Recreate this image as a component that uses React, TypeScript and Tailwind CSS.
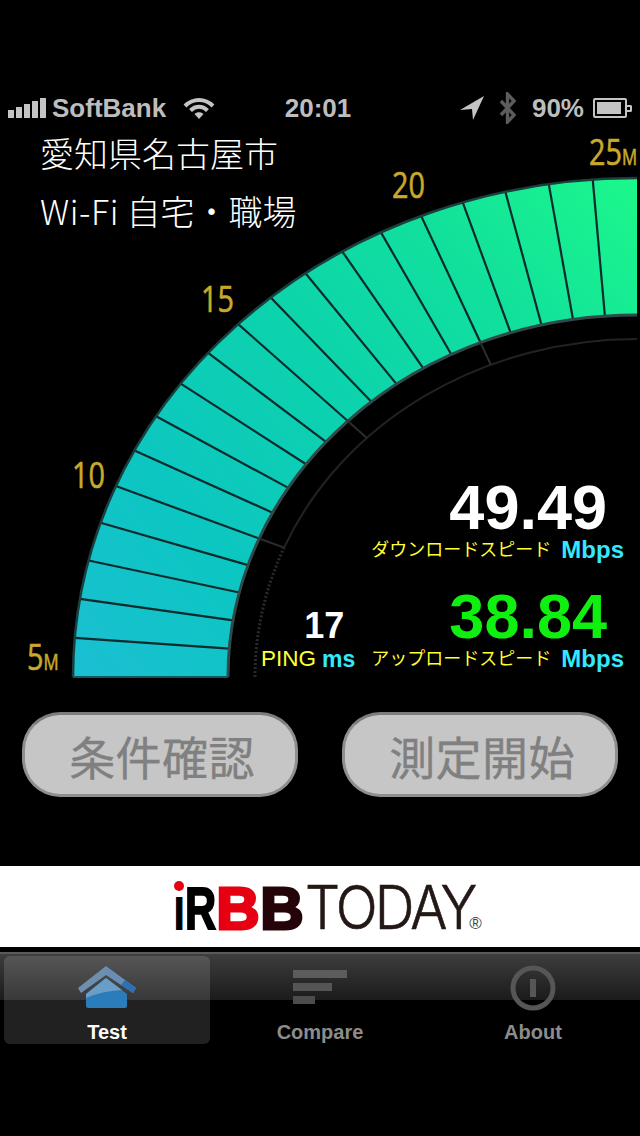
const CX = 637
const CY = 553
const OUT = { rx: 564, ry: 499 }
const IN = { rx: 409, ry: 362 }
const RING = { rx: 382, ry: 338 }

// point on one of the gauge's ellipses, deg measured from the left end going clockwise
function pt(e: { rx: number; ry: number }, deg: number) {
  const t = (deg * Math.PI) / 180
  return [CX - e.rx * Math.cos(t), CY - e.ry * Math.sin(t)]
}

function arc(e: { rx: number; ry: number }, from = 0, to = 90) {
  const [x0, y0] = pt(e, from)
  const [x1, y1] = pt(e, to)
  return `M${x0} ${y0}A${e.rx} ${e.ry} 0 0 1 ${x1} ${y1}`
}

const dividers = Array.from({ length: 19 }, (_, i) => (i + 1) * 4.5)

const band = (() => {
  const [ix, iy] = pt(IN, 90)
  const [ex, ey] = pt(IN, 0)
  return `${arc(OUT)}L${ix} ${iy}A${IN.rx} ${IN.ry} 0 0 0 ${ex} ${ey}Z`
})()

const gaugeLabels = [
  { text: "5", unit: true, x: 27, y: 546 },
  { text: "10", x: 72, y: 364 },
  { text: "15", x: 201, y: 188 },
  { text: "20", x: 392, y: 74 },
  { text: "25", unit: true, x: 589, y: 41 },
]

function Gauge() {
  return (
    <svg className="absolute inset-0" width="640" height="566" viewBox="0 0 640 566">
      <defs>
        <linearGradient id="band" gradientUnits="userSpaceOnUse" x1="73" y1="554" x2="637" y2="54">
          <stop offset="0" stopColor="#1bbfd2" />
          <stop offset="0.25" stopColor="#0cc6c2" />
          <stop offset="0.5" stopColor="#0cd2ae" />
          <stop offset="0.75" stopColor="#11e09c" />
          <stop offset="1" stopColor="#1cf88a" />
        </linearGradient>
      </defs>
      <path d={band} fill="url(#band)" />
      {dividers.map((deg) => {
        const [x0, y0] = pt(OUT, deg)
        const [x1, y1] = pt(IN, deg)
        return <line key={deg} x1={x0} y1={y0} x2={x1} y2={y1} stroke="#0b2a2c" strokeWidth="2.2" />
      })}
      <path d={arc(OUT)} fill="none" stroke="#17403f" strokeWidth="2.5" />
      <path d={arc(IN)} fill="none" stroke="#2f4a4a" strokeWidth="3" />
      <line x1="73" y1={CY} x2="228" y2={CY} stroke="#0f5a60" strokeWidth="2" />
      <path d={arc(RING, 0, 22.5)} fill="none" stroke="#2a2a2a" strokeWidth="3" strokeDasharray="2 2" />
      <path d={arc(RING, 22.5, 90)} fill="none" stroke="#222" strokeWidth="2" />
      {[22.5, 45, 67.5].map((deg) => {
        const [x0, y0] = pt(IN, deg)
        const [x1, y1] = pt(RING, deg)
        return <line key={deg} x1={x0} y1={y0} x2={x1} y2={y1} stroke="#2c2c2c" strokeWidth="2" />
      })}
      {gaugeLabels.map((l) => (
        <text
          key={l.text}
          transform={`translate(${l.x} ${l.y}) scale(0.8 1)`}
          fill="#c9a92b"
          stroke="#c9a92b"
          strokeWidth="0.6"
          fontSize="36"
          className="font-['Open_Sans',sans-serif]"
        >
          {l.text}
          {l.unit && <tspan fontSize="21">M</tspan>}
        </text>
      ))}
    </svg>
  )
}

function StatusBar() {
  return (
    <div className="grid h-8 grid-cols-[1fr_auto_1fr] items-center px-2 text-[26px] font-bold leading-8 text-[#bdbdbd]">
      <div className="flex items-center">
        <div className="flex h-5 items-end gap-[2px]">
          <span className="h-2 w-[6px] bg-[#c4c4c4]" />
          <span className="h-[11px] w-[6px] bg-[#c4c4c4]" />
          <span className="h-[14px] w-[6px] bg-[#c4c4c4]" />
          <span className="h-[17px] w-[6px] bg-[#c4c4c4]" />
          <span className="h-5 w-[6px] bg-[#c4c4c4]" />
        </div>
        <span className="ml-[6px]">SoftBank</span>
        <svg className="ml-[17px]" width="32" height="22" viewBox="0 0 32 22">
          <path d="M2 9C10 1 22 1 30 9" fill="none" stroke="#c4c4c4" strokeWidth="4" />
          <path d="M7.5 13.5C12.5 8.5 19.5 8.5 24.5 13.5" fill="none" stroke="#c4c4c4" strokeWidth="4" />
          <path d="M11.5 17C14 14.5 18 14.5 20.5 17L16 22Z" fill="#c4c4c4" />
        </svg>
      </div>
      <span className="mr-1">20:01</span>
      <div className="flex items-center justify-end">
        <svg width="24" height="24" viewBox="0 0 24 24">
          <path d="M24 0L0 14L12 13L13 24Z" fill="#c4c4c4" />
        </svg>
        <svg className="ml-[15px]" width="18" height="32" viewBox="0 0 18 32">
          <path d="M2 9L15 23L8.5 30V2L15 9L2 23" fill="none" stroke="#5c5c5c" strokeWidth="3.4" />
        </svg>
        <span className="ml-[15px]">90%</span>
        <div className="ml-[9px] flex items-center">
          <div className="flex h-5 w-[34px] items-center rounded-[2px] border-2 border-[#c4c4c4] p-[2px]">
            <div className="h-full w-[92%] bg-[#c4c4c4]" />
          </div>
          <div className="h-[7px] w-[5px] rounded-r-[2px] border-2 border-l-0 border-[#c4c4c4]" />
        </div>
      </div>
    </div>
  )
}

function Speed({ value, label, color }: { value: string; label: string; color: string }) {
  return (
    <div className="flex flex-col items-end">
      <div className={`h-[60px] pr-[17px] text-[63px] font-bold leading-[60px] ${color}`}>{value}</div>
      <div className="flex h-[26px] items-center">
        <span className="text-[18px] leading-[26px] text-[#ffff33]">{label}</span>
        <span className="ml-[10px] text-[24px] font-bold leading-[26px] text-[#33e8ff]">Mbps</span>
      </div>
    </div>
  )
}

function Logo() {
  return (
    <div className="flex h-[60px] items-baseline pl-4 text-[60px] leading-[60px] text-[#231815]">
      <span className="relative w-[10px] font-bold">
        <span className="inline-block origin-left scale-x-[0.62] text-black [-webkit-text-stroke:2px_#000]">ı</span>
        <span className="absolute left-0 top-[2px] h-[10px] w-[10px] rounded-full bg-[#e60012]" />
      </span>
      <span className="ml-[1px] inline-block w-[31px] origin-left scale-x-[0.72] font-bold text-black [-webkit-text-stroke:2px_#000]">R</span>
      <span className="w-[44px] font-bold text-[#e60012] [-webkit-text-stroke:3px_#e60012]">B</span>
      <span className="w-[45px] font-bold text-[#240408] [-webkit-text-stroke:3px_#240408]">B</span>
      <span className="inline-block w-[165px] origin-left scale-x-[0.92] font-['Inter'] font-light tracking-[-3px] [-webkit-text-stroke:0.6px_#231815]">TODAY</span>
      <span className="ml-[-1px] text-[17px] leading-none text-[#444]">®</span>
    </div>
  )
}

function Tab({ label, active, children }: { label: string; active?: boolean; children: React.ReactNode }) {
  return (
    <div className={`flex h-[88px] flex-col items-center rounded-md ${active ? "bg-white/[0.13]" : ""}`}>
      <div className="flex h-[62px] items-center justify-center">{children}</div>
      <span className={`mt-1 text-[20px] font-bold leading-6 ${active ? "text-white" : "text-[#8c8c8c]"}`}>{label}</span>
    </div>
  )
}

export default function App() {
  return (
    <div className="h-[1136px] w-[640px] overflow-hidden bg-black pt-[92px] font-['Liberation_Sans','Noto_Sans_CJK_JP',sans-serif]">
      <StatusBar />

      <section className="relative h-[566px]">
        <Gauge />
        <div className="relative flex h-full flex-col justify-between pb-[18px]">
          <div className="pl-10 text-[34px] leading-[58px] text-white">
            <div className="font-['Noto_Sans_CJK_JP',sans-serif] font-light">愛知県名古屋市</div>
            <div className="font-['Noto_Sans_CJK_JP',sans-serif] font-light">
              <span className="tracking-[0.6px]">Wi-Fi</span> 自宅・職場
            </div>
          </div>
          <div className="flex items-end justify-end pr-4">
            <div className="mr-4 flex flex-col items-end">
              <div className="pr-[11px] text-[36px] font-bold leading-[40px] text-white">17</div>
              <div className="flex h-[26px] items-center">
                <span className="text-[22.5px] leading-[26px] text-[#ffff33]">PING</span>
                <span className="ml-[6px] text-[23px] font-bold leading-[26px] text-[#33e8ff]">ms</span>
              </div>
            </div>
            <div className="flex flex-col gap-[23px]">
              <Speed value="49.49" label="ダウンロードスピード" color="text-white" />
              <Speed value="38.84" label="アップロードスピード" color="text-[#10f010]" />
            </div>
          </div>
        </div>
      </section>

      <div className="flex justify-between px-[22px] pt-[22px]">
        {["条件確認", "測定開始"].map((label) => (
          <button
            key={label}
            className="flex h-[85px] w-[276px] items-center justify-center rounded-[38px] border-[3px] border-[#8e8e8e] border-t-[#7c7c7c] bg-[#c6c6c6] pl-[4px] font-['Noto_Sans_CJK_JP',sans-serif] text-[46px] leading-none tracking-[0.4px] text-[#808080] [-webkit-text-stroke:0.3px_#808080]"
          >
            {label}
          </button>
        ))}
      </div>

      <div className="mt-[69px] flex h-[81px] items-center justify-center bg-white">
        <Logo />
      </div>

      <nav className="relative mt-[5px] h-[100px] border-t-2 border-[#5a5a5a]">
        <div className="absolute inset-x-0 top-0 h-[46px] bg-linear-to-b from-[#3e3e3e] to-[#1b1b1b]" />
        <div className="relative grid grid-cols-3 gap-[7px] px-1 pt-[2px]">
          <Tab label="Test" active>
            <svg width="60" height="44" viewBox="0 0 60 44" className="mb-[-2px]">
              <path d="M29 13L50 29V41Q50 43 48 43H11Q9 43 9 41V29Z" fill="#2a7cbb" />
              <path d="M29 13L45 25Q25 26 9 33V29Z" fill="#6a9dc8" />
              <path d="M1 23L29 1V10L4 28Z" fill="#6f8fae" />
              <path d="M29 1L59 23L56 28L29 10Z" fill="#6a8db5" />
              <path d="M48 15L59 23L56 28L44 20Z" fill="#2f6fb5" />
            </svg>
          </Tab>
          <Tab label="Compare">
            <div className="mb-[-2px] flex w-[54px] flex-col gap-[5px]">
              <span className="h-2 w-[54px] bg-[#5c5c5c]" />
              <span className="h-2 w-[39px] bg-[#555]" />
              <span className="h-2 w-[22px] bg-[#4c4c4c]" />
            </div>
          </Tab>
          <Tab label="About">
            <svg width="46" height="46" viewBox="0 0 46 46" className="mb-[-4px]">
              <circle cx="23" cy="23" r="20" fill="none" stroke="#565656" strokeWidth="5" />
              <rect x="20" y="14" width="6" height="18" fill="#565656" />
            </svg>
          </Tab>
        </div>
      </nav>
    </div>
  )
}
